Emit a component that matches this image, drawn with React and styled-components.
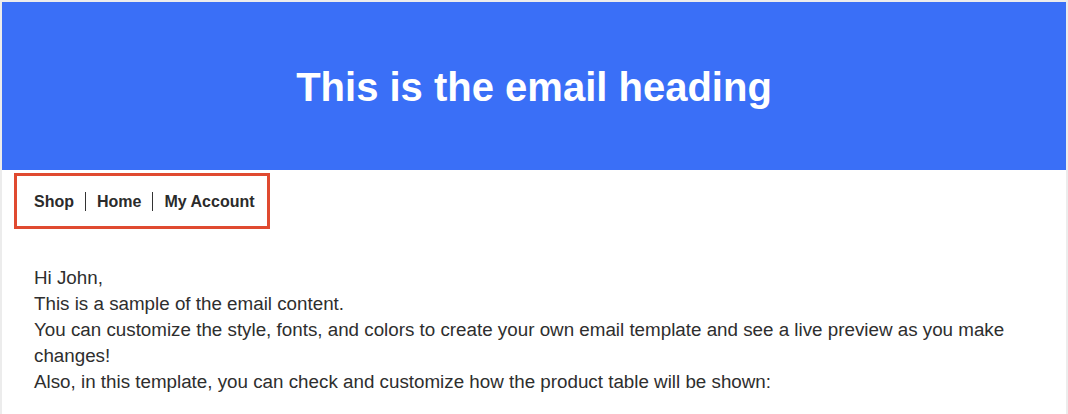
import React from "react";
import styled, { createGlobalStyle } from "styled-components";

const Global = createGlobalStyle`
  html, body { margin: 0; padding: 0; background: #ececec; }
  body { font-family: "Liberation Sans", Arial, Helvetica, sans-serif; }
`;

const Frame = styled.div`
  padding: 2px 2px 0 2px;
  height: 412px;
  overflow: hidden;
`;

const Card = styled.div`
  background: #ffffff;
  height: 100%;
`;

const Header = styled.header`
  background: #3a6ff7;
  height: 168px;
  display: flex;
  align-items: center;
  justify-content: center;
`;

const Heading = styled.h1`
  margin: 0;
  color: #ffffff;
  font-size: 40px;
  font-weight: 700;
  line-height: 48px;
  padding-top: 2px;
`;

const NavWrap = styled.div`
  padding: 3px 0 0 12px;
`;

const Nav = styled.nav`
  display: inline-flex;
  align-items: center;
  border: 3px solid #e04a30;
  padding: 0 12px 0 17px;
  height: 56px;
  box-sizing: border-box;
`;

const NavItem = styled.a`
  font-size: 16px;
  font-weight: 700;
  color: #2b2b2b;
  text-decoration: none;
  padding: 0 11px;
  line-height: 19px;
  border-left: ${(p) => (p.$first ? "none" : "1px solid #333")};
  &:first-child { padding-left: 0; }
  &:last-child { padding-right: 0; }
`;

const Content = styled.div`
  padding: 36px 30px 0 32px;
  font-size: 18.8px;
  line-height: 26px;
  color: #2e2e2e;
`;

const Line = styled.p`
  margin: 0;
`;

export default function App() {
  return (
    <>
      <Global />
      <Frame>
        <Card>
          <Header>
            <Heading>This is the email heading</Heading>
          </Header>
          <NavWrap>
            <Nav>
              <NavItem $first>Shop</NavItem>
              <NavItem>Home</NavItem>
              <NavItem>My Account</NavItem>
            </Nav>
          </NavWrap>
          <Content>
            <Line>Hi John,</Line>
            <Line>This is a sample of the email content.</Line>
            <Line>
              You can customize the style, fonts, and colors to create your own email template and see a live preview as you make changes!
            </Line>
            <Line>Also, in this template, you can check and customize how the product table will be shown:</Line>
          </Content>
        </Card>
      </Frame>
    </>
  );
}
